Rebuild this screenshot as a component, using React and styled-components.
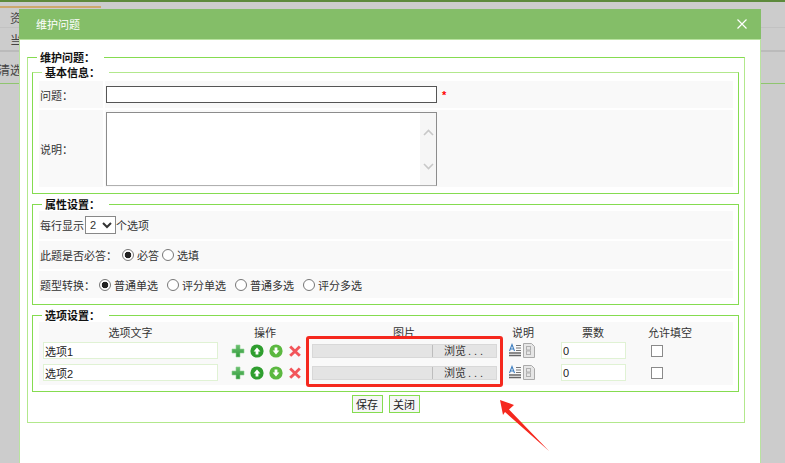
import React from "react";
import styled, { createGlobalStyle } from "styled-components";

const GlobalStyle = createGlobalStyle`
  html, body {
    margin: 0;
    padding: 0;
    height: 463px;
    overflow: hidden;
    background: #cccccc;
  }
  body, input, textarea, select, button, legend {
    font-family: "Liberation Sans", "Noto Sans CJK SC", sans-serif;
    font-size: 11px;
  }
`;

const options = ["选项1", "选项2"];
const convertTypes = ["普通单选", "评分单选", "普通多选", "评分多选"];

const PlusIcon = () => (
  <svg width="14" height="14" viewBox="0 0 14 14">
    <defs>
      <linearGradient id="plusFill" x1="0" y1="0" x2="0" y2="1">
        <stop offset="0" stopColor="#6cc070" />
        <stop offset="1" stopColor="#2f9a3a" />
      </linearGradient>
    </defs>
    <path d="M5 1h4v4h4v4H9v4H5V9H1V5h4z" fill="url(#plusFill)" stroke="#8ed090" strokeWidth="0.6" />
  </svg>
);

const ArrowCircleIcon = ({ down }) => (
  <svg width="14" height="14" viewBox="0 0 14 14">
    <circle cx="7" cy="7" r="6.6" fill={down ? "#5bb840" : "#2f9e2f"} />
    <path
      d={down ? "M5.6 3.4h2.8v3.2h2L7 10.4 3.6 6.6h2z" : "M5.6 10.6h2.8V7.4h2L7 3.6 3.6 7.4h2z"}
      fill="#ffffff"
    />
  </svg>
);

const RemoveIcon = () => (
  <svg width="14" height="14" viewBox="0 0 14 14">
    <path d="M3.2 1.4 7 5.2l3.8-3.8 2 2L9 7.2l3.8 3.6-2 2L7 9.2l-3.8 3.6-2-2L5 7.2 1.2 3.4z" fill="#f2555a" />
  </svg>
);

const TextStyleIcon = () => (
  <svg width="12" height="14" viewBox="0 0 12 14">
    <path d="M0.5 8 3 1.5 5.5 8M1.5 6h3" fill="none" stroke="#3f7fc0" strokeWidth="1.1" />
    <path d="M7 2.5h5M7 5h5M7 7.5h5" stroke="#777777" strokeWidth="1" />
    <path d="M0 10h12M0 12.5h12" stroke="#666666" strokeWidth="1.3" />
  </svg>
);

const DocIcon = () => (
  <svg width="12" height="15" viewBox="0 0 12 15">
    <path d="M0.5 0.5h8l3 3v11h-11z" fill="#e6e6e6" stroke="#aaaaaa" />
    <rect x="3.5" y="3.5" width="4" height="3.5" fill="none" stroke="#b0b0b0" />
    <rect x="3.5" y="8" width="4" height="3.5" fill="none" stroke="#b0b0b0" />
  </svg>
);

const Chevron = ({ down }) => (
  <svg width="11" height="7" viewBox="0 0 11 7">
    <path d={down ? "M1 1l4.5 4.5L10 1" : "M1 6l4.5-4.5L10 6"} fill="none" stroke="#c8c8c8" strokeWidth="1.6" />
  </svg>
);

const App = () => (
  <Page>
    <GlobalStyle />
    <TopStripe />
    <BackTab />
    <BackRow $height={20}>
      <span>资</span>
    </BackRow>
    <BackRow $height={24} $divider>
      <span>当</span>
    </BackRow>
    <BackFilter>清选</BackFilter>

    <Dialog>
      <DialogHeader>
        <span>维护问题</span>
        <CloseButton>
          <svg width="10" height="10" viewBox="0 0 10 10">
            <path d="M0.5 0.5l9 9M9.5 0.5l-9 9" stroke="#ffffff" strokeWidth="1.2" />
          </svg>
        </CloseButton>
      </DialogHeader>

      <OuterSet>
        <SetTitle $inset={5}>维护问题：</SetTitle>

        <InnerSet $light $top={3}>
          <SetTitle $inset={3}>基本信息：</SetTitle>
          <Rows>
            <FormRow $height={27}>
              <FieldLabel>问题：</FieldLabel>
              <FieldValue>
                <TitleInput type="text" />
                <Required>*</Required>
              </FieldValue>
            </FormRow>
            <FormRow $height={77}>
              <FieldLabel>说明：</FieldLabel>
              <FieldValue>
                <MemoBox>
                  <MemoText />
                  <MemoScroll>
                    <Chevron />
                    <Chevron down />
                  </MemoScroll>
                </MemoBox>
              </FieldValue>
            </FormRow>
          </Rows>
        </InnerSet>

        <InnerSet $top={1}>
          <SetTitle $inset={3}>属性设置：</SetTitle>
          <Rows>
            <PlainRow $height={28}>
              每行显示
              <CountSelect defaultValue="2">
                <option value="1">1</option>
                <option value="2">2</option>
                <option value="3">3</option>
              </CountSelect>
              个选项
            </PlainRow>
            <PlainRow $height={28}>
              <RowCaption $width={82}>此题是否必答：</RowCaption>
              <Choice $gap={3}>
                <Radio name="must" defaultChecked />
                必答
              </Choice>
              <Choice $gap={3}>
                <Radio name="must" />
                选填
              </Choice>
            </PlainRow>
            <PlainRow $height={27}>
              <RowCaption $width={59}>题型转换：</RowCaption>
              {convertTypes.map((name, i) => (
                <Choice key={name} $gap={9}>
                  <Radio name="convert" defaultChecked={i === 0} />
                  {name}
                </Choice>
              ))}
            </PlainRow>
          </Rows>
        </InnerSet>

        <InnerSet $top={1}>
          <SetTitle $inset={3}>选项设置：</SetTitle>
          <OptionTable>
            <OptionHead>
              <span>选项文字</span>
              <span>操作</span>
              <span>图片</span>
              <span>说明</span>
              <span>票数</span>
              <span>允许填空</span>
            </OptionHead>
            {options.map(name => (
              <OptionRow key={name}>
                <OptionText defaultValue={name} />
                <OpIcons>
                  <PlusIcon />
                  <ArrowCircleIcon />
                  <ArrowCircleIcon down />
                  <RemoveIcon />
                </OpIcons>
                <FileField>
                  <FileName />
                  <FileButton>
                    浏览<FileDots>...</FileDots>
                  </FileButton>
                </FileField>
                <NoteIcons>
                  <TextStyleIcon />
                  <DocIcon />
                </NoteIcons>
                <VoteInput defaultValue="0" />
                <CheckCell>
                  <Check type="checkbox" />
                </CheckCell>
              </OptionRow>
            ))}
          </OptionTable>
        </InnerSet>

        <Actions>
          <ActionButton>保存</ActionButton>
          <ActionButton>关闭</ActionButton>
        </Actions>
      </OuterSet>
    </Dialog>

    <RedFrame />
    <RedArrow width="60" height="60" viewBox="0 0 60 60">
      <polygon points="0,0 14,5 9,9.5 49,51 5,12 3,15" fill="#f5281e" />
    </RedArrow>
  </Page>
);

const Page = styled.div`
  position: relative;
  width: 785px;
  height: 463px;
  overflow: hidden;
  background: #cccccc;
  color: #333333;
`;

const TopStripe = styled.div`
  height: 2px;
  background: #5d8a3c;
`;

const BackTab = styled.div`
  width: 101px;
  height: 2px;
  margin-top: 4px;
  background: #cda86c;
`;

const BackRow = styled.div`
  height: ${props => props.$height}px;
  box-sizing: border-box;
  padding-left: 10px;
  display: flex;
  align-items: center;
  font-size: 12px;
  color: #444444;
  border-bottom: ${props => (props.$divider ? "solid 2px #bbbbbb" : "solid 1px #c2c2c2")};
`;

const BackFilter = styled.div`
  height: 32px;
  box-sizing: border-box;
  padding-top: 3px;
  margin-left: -2px;
  display: flex;
  align-items: center;
  font-size: 12px;
  color: #444444;
  border-bottom: solid 1px #8fc56f;
`;

const Dialog = styled.div`
  position: absolute;
  left: 19px;
  top: 9px;
  width: 740px;
  height: 460px;
  background: #ffffff;
  border: solid 1px #b9e3a0;
`;

const DialogHeader = styled.div`
  height: 30px;
  margin: -1px -1px 0;
  padding: 0 14px 0 17px;
  display: flex;
  align-items: center;
  justify-content: space-between;
  background: #84be68;
  color: #ffffff;
  border-bottom: solid 1px #b9e3a0;
`;

const CloseButton = styled.span`
  display: flex;
`;

const OuterSet = styled.fieldset`
  margin: 9px 15px 0 7px;
  padding: 0 5px 9px 4px;
  border: solid 1px #b2e88c;
  border-top-color: #85dc50;
`;

const InnerSet = styled.fieldset`
  margin: 1px 0 0;
  padding: ${props => props.$top}px 5px 6px 6px;
  border: solid 1px #85dc50;
  border-top-color: ${props => (props.$light ? "#b2e88c" : "#85dc50")};
  & + & {
    margin-top: 2px;
  }
`;

const SetTitle = styled.legend`
  margin-left: ${props => props.$inset}px;
  margin-bottom: -2px;
  padding: 2px 9px 0 3px;
  line-height: 14px;
  font-weight: bold;
  color: #111111;
`;

const Rows = styled.div`
  display: flex;
  flex-direction: column;
  gap: 2px;
`;

const FormRow = styled.div`
  display: flex;
  gap: 2px;
  height: ${props => props.$height}px;
`;

const FieldLabel = styled.div`
  width: 64px;
  padding-left: 1px;
  box-sizing: border-box;
  display: flex;
  align-items: center;
  background: #f9f9f9;
`;

const FieldValue = styled.div`
  flex: 1;
  padding-left: 1px;
  display: flex;
  align-items: center;
  background: #f9f9f9;
`;

const TitleInput = styled.input`
  width: 331px;
  height: 17px;
  margin: 0;
  padding: 0 2px;
  box-sizing: border-box;
  border: solid 1px #555555;
  background: #ffffff;
  outline: none;
`;

const Required = styled.span`
  margin-left: 5px;
  color: #ff0000;
  font-weight: bold;
`;

const MemoBox = styled.div`
  width: 331px;
  height: 74px;
  box-sizing: border-box;
  display: flex;
  border: solid 1px #8c8c8c;
  border-bottom-color: #b0b0b0;
  background: #ffffff;
`;

const MemoText = styled.textarea`
  flex: 1;
  margin: 0;
  padding: 0;
  border: none;
  outline: none;
  resize: none;
`;

const MemoScroll = styled.div`
  width: 16px;
  padding: 16px 0 15px;
  box-sizing: border-box;
  display: flex;
  flex-direction: column;
  align-items: center;
  justify-content: space-between;
  background: #f6f6f6;
`;

const PlainRow = styled.div`
  height: ${props => props.$height}px;
  padding-left: 1px;
  display: flex;
  align-items: center;
  background: #f9f9f9;
`;

const CountSelect = styled.select`
  width: 31px;
  height: 18px;
  margin: 0 0 0 1px;
  padding: 0;
  border: solid 1px #888888;
  border-radius: 0;
  background: #ffffff;
  color: #333333;
`;

const RowCaption = styled.span`
  width: ${props => props.$width}px;
`;

const Choice = styled.label`
  display: flex;
  align-items: center;
  gap: 3px;
  margin-right: ${props => props.$gap}px;
`;

const Radio = styled.input.attrs({ type: "radio" })`
  appearance: none;
  width: 12px;
  height: 12px;
  margin: 0;
  border: solid 1px #777777;
  border-radius: 50%;
  background: #ffffff;
  &:checked {
    background: radial-gradient(circle, #222222 0 3px, #ffffff 3.6px);
  }
`;

const OptionTable = styled.div`
  padding-bottom: 4px;
  display: flex;
  flex-direction: column;
  gap: 5px;
  background: #f9f9f9;
`;

const columns = "183px 86px 192px 46px 94px 60px 33px";

const OptionHead = styled.div`
  height: 20px;
  margin-bottom: -5px;
  padding-bottom: 1px;
  box-sizing: border-box;
  display: grid;
  grid-template-columns: ${columns};
  align-items: center;
  justify-items: center;
`;

const OptionRow = styled.div`
  height: 17px;
  display: grid;
  grid-template-columns: ${columns};
  align-items: center;
`;

const OptionText = styled.input`
  width: 175px;
  height: 17px;
  margin-left: 4px;
  padding: 0 1px;
  box-sizing: border-box;
  border: solid 1px #e0f2d4;
  background: #ffffff;
  color: #222222;
  outline: none;
`;

const OpIcons = styled.div`
  padding-left: 9px;
  display: flex;
  gap: 5px;
`;

const FileField = styled.div`
  width: 185px;
  height: 14px;
  margin-left: 4px;
  display: flex;
  background: #e4e4e4;
  border: solid 1px #d8d8d8;
  box-sizing: border-box;
`;

const FileName = styled.div`
  width: 119px;
`;

const FileButton = styled.div`
  flex: 1;
  padding-left: 11px;
  display: flex;
  align-items: center;
  line-height: 12px;
  color: #333333;
  border-left: solid 1px #bdbdbd;
`;

const FileDots = styled.span`
  margin-left: 2px;
  letter-spacing: 3px;
`;

const NoteIcons = styled.div`
  padding-left: 9px;
  display: flex;
  gap: 2px;
`;

const VoteInput = styled.input`
  width: 65px;
  height: 17px;
  margin-left: 15px;
  padding: 0 1px;
  box-sizing: border-box;
  border: solid 1px #e0f2d4;
  background: #ffffff;
  color: #222222;
  outline: none;
`;

const CheckCell = styled.div`
  display: flex;
  padding-left: 11px;
`;

const Check = styled.input`
  appearance: none;
  width: 12px;
  height: 12px;
  margin: 0;
  border: solid 1px #8a8a8a;
  background: #ffffff;
`;

const Actions = styled.div`
  margin-top: 3px;
  display: flex;
  justify-content: center;
  gap: 6px;
`;

const ActionButton = styled.button`
  width: 31px;
  height: 18px;
  padding: 0;
  border: solid 1px #85dc50;
  background: #f6f6f6;
  color: #222222;
`;

const RedFrame = styled.div`
  position: absolute;
  left: 306px;
  top: 336px;
  width: 197px;
  height: 51px;
  box-sizing: border-box;
  border: solid 3px #f5281e;
  border-radius: 3px;
`;

const RedArrow = styled.svg`
  position: absolute;
  left: 500px;
  top: 400px;
`;

export default App;
